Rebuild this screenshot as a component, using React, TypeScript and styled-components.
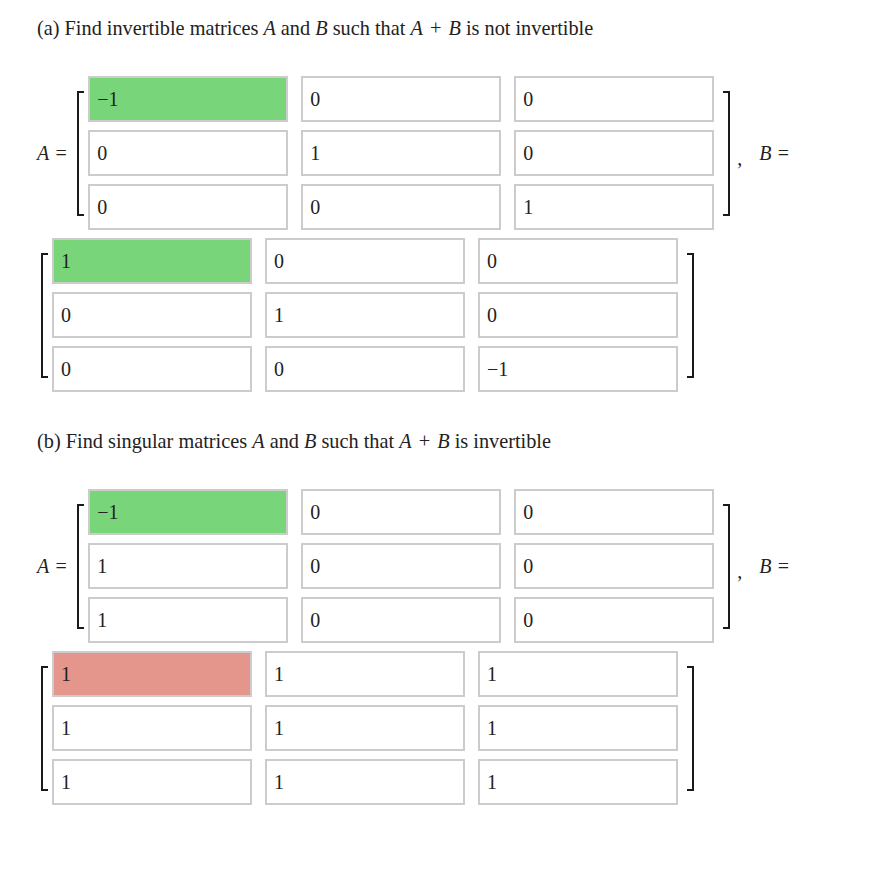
import React from "react";
import styled, { createGlobalStyle } from "styled-components";

type Tone = "plain" | "correct" | "wrong";
type Entry = { v: string; tone?: Tone };

const GlobalStyle = createGlobalStyle`
  html, body {
    margin: 0;
    padding: 0;
    background: #fff;
  }
  body {
    font-family: "Liberation Serif", "DejaVu Serif", serif;
    color: #222;
  }
`;

function Matrix({ rows }: { rows: Entry[][] }) {
  return (
    <SMatrix>
      <SBracket side="left" />
      <SGrid>
        {rows.flat().map((e, i) => (
          <SCell key={i} tone={e.tone || "plain"}>
            {e.v}
          </SCell>
        ))}
      </SGrid>
      <SBracket side="right" />
    </SMatrix>
  );
}

function Problem({
  prompt,
  a,
  b,
}: {
  prompt: React.ReactNode;
  a: Entry[][];
  b: Entry[][];
}) {
  return (
    <SProblem>
      <SPrompt>{prompt}</SPrompt>
      <SEquation>
        <SLabel>
          <SVar>A</SVar>
          <SOp>=</SOp>
        </SLabel>
        <Matrix rows={a} />
        <SSep>
          <SComma>,</SComma>
          <SVar>B</SVar>
          <SOp>=</SOp>
        </SSep>
        <Matrix rows={b} />
      </SEquation>
    </SProblem>
  );
}

const e = (v: string, tone?: Tone): Entry => ({ v, tone });

export default function App() {
  return (
    <SPage>
      <GlobalStyle />
      <Problem
        prompt={
          <>
            (a) Find invertible matrices <SVar>A</SVar> and <SVar>B</SVar> such
            that <SVar>A</SVar> <SPlus>+</SPlus> <SVar>B</SVar> is not invertible
          </>
        }
        a={[
          [e("−1", "correct"), e("0"), e("0")],
          [e("0"), e("1"), e("0")],
          [e("0"), e("0"), e("1")],
        ]}
        b={[
          [e("1", "correct"), e("0"), e("0")],
          [e("0"), e("1"), e("0")],
          [e("0"), e("0"), e("−1")],
        ]}
      />
      <Problem
        prompt={
          <>
            (b) Find singular matrices <SVar>A</SVar> and <SVar>B</SVar> such
            that <SVar>A</SVar> <SPlus>+</SPlus> <SVar>B</SVar> is invertible
          </>
        }
        a={[
          [e("−1", "correct"), e("0"), e("0")],
          [e("1"), e("0"), e("0")],
          [e("1"), e("0"), e("0")],
        ]}
        b={[
          [e("1", "wrong"), e("1"), e("1")],
          [e("1"), e("1"), e("1")],
          [e("1"), e("1"), e("1")],
        ]}
      />
    </SPage>
  );
}

const SPage = styled.div`
  padding: 16px 0 40px 37px;
  width: 820px;
`;

const SProblem = styled.section`
  & + & {
    margin-top: 37px;
  }
`;

const SPrompt = styled.p`
  margin: 0 0 36px;
  font-size: 20.3px;
  line-height: 24px;
  color: #222;
`;

const SVar = styled.i`
  font-style: italic;
  font-family: "Liberation Serif", serif;
`;

const SPlus = styled.span`
  padding: 0 2px;
`;

const SEquation = styled.div`
  display: flex;
  flex-wrap: wrap;
  align-items: center;
  row-gap: 8px;
  font-size: 20px;
`;

const SLabel = styled.span`
  display: inline-flex;
  align-items: center;
  gap: 6px;
  margin-right: 6px;
  & > span {
    display: inline-block;
    width: 12px;
    text-align: center;
  }
`;

const SOp = styled.span`
  font-style: normal;
`;

const SSep = styled.span`
  display: inline-flex;
  align-items: center;
  margin-left: 7px;
  & > i {
    margin-left: 17px;
    margin-right: 4px;
  }
  & > span:last-child {
    display: inline-block;
    width: 16px;
    text-align: center;
  }
`;

const SComma = styled.span`
  position: relative;
  top: 5px;
`;

const SMatrix = styled.div`
  display: flex;
  align-items: stretch;
  margin-left: 4px;
`;

const SBracket = styled.div<{ side: "left" | "right" }>`
  width: 5px;
  margin: 15px 0 14px;
  border-top: 2px solid #1a1a1a;
  border-bottom: 2px solid #1a1a1a;
  ${(p) =>
    p.side === "left"
      ? "border-left: 2px solid #1a1a1a; margin-right: 4px;"
      : "border-right: 2px solid #1a1a1a; margin-left: 9px;"}
`;

const SGrid = styled.div`
  display: grid;
  grid-template-columns: repeat(3, 200px);
  grid-auto-rows: 46px;
  column-gap: 13px;
  row-gap: 8px;
`;

const toneBg: Record<Tone, string> = {
  plain: "#fff",
  correct: "#79d579",
  wrong: "#e4968d",
};

const SCell = styled.div<{ tone: Tone }>`
  box-sizing: border-box;
  display: flex;
  align-items: center;
  padding: 0 7px;
  border: 2px solid #cccccc;
  background: ${(p) => toneBg[p.tone]};
  font-size: 20px;
  color: #222;
`;
